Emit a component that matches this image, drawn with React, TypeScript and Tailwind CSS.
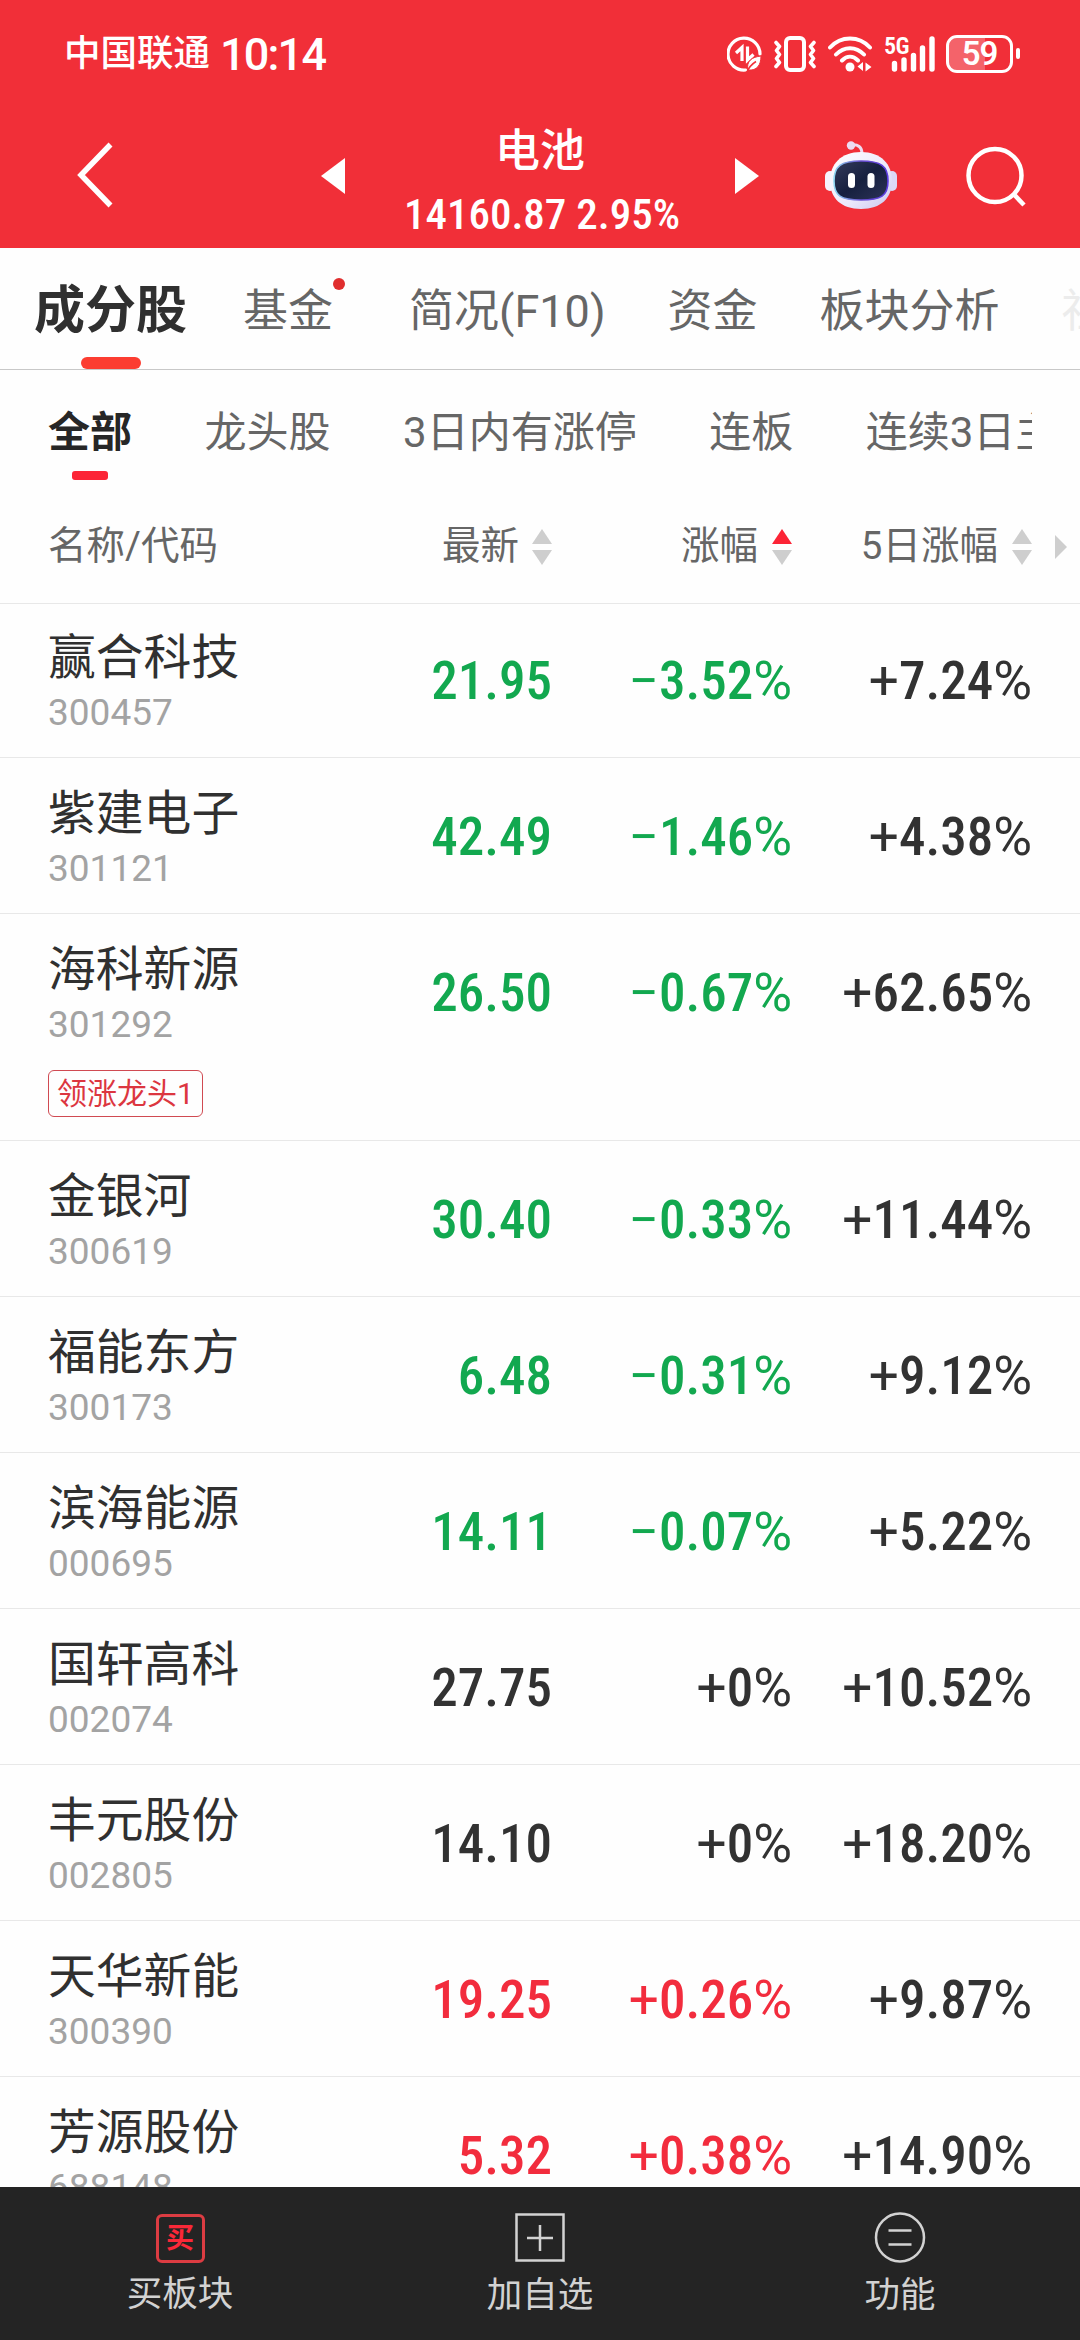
interface Stock {
  name: string;
  code: string;
  price: string;
  change: string;
  fiveDay: string;
  tag?: string;
}

const stocks: Stock[] = [
  { name: "赢合科技", code: "300457", price: "21.95", change: "−3.52%", fiveDay: "+7.24%" },
  { name: "紫建电子", code: "301121", price: "42.49", change: "−1.46%", fiveDay: "+4.38%" },
  {
    name: "海科新源",
    code: "301292",
    price: "26.50",
    change: "−0.67%",
    fiveDay: "+62.65%",
    tag: "领涨龙头1",
  },
  { name: "金银河", code: "300619", price: "30.40", change: "−0.33%", fiveDay: "+11.44%" },
  { name: "福能东方", code: "300173", price: "6.48", change: "−0.31%", fiveDay: "+9.12%" },
  { name: "滨海能源", code: "000695", price: "14.11", change: "−0.07%", fiveDay: "+5.22%" },
  { name: "国轩高科", code: "002074", price: "27.75", change: "+0%", fiveDay: "+10.52%" },
  { name: "丰元股份", code: "002805", price: "14.10", change: "+0%", fiveDay: "+18.20%" },
  { name: "天华新能", code: "300390", price: "19.25", change: "+0.26%", fiveDay: "+9.87%" },
  { name: "芳源股份", code: "688148", price: "5.32", change: "+0.38%", fiveDay: "+14.90%" },
];

const tabs = ["简况(F10)", "资金", "板块分析"];
const filters = ["龙头股", "3日内有涨停", "连板", "连续3日主力"];

function changeColor(change: string) {
  if (change.startsWith("−")) return "text-[#12a84f]";
  if (change === "+0%") return "text-[#323232]";
  return "text-[#f22c3d]";
}

function StatusBar() {
  return (
    <div className="flex h-[107px] items-center justify-between pl-16 pr-[60px] text-white">
      <div className="flex items-center gap-[10px] pt-0.5 font-medium leading-none">
        <span className="text-[36.5px]">中国联通</span>
        <span className="text-[45px] tracking-[-1.8px]">10:14</span>
      </div>
      <div className="flex items-center">
        {/* data saver */}
        <svg className="h-9 w-[35px]" viewBox="0 0 35 36" fill="none" stroke="currentColor">
          <path d="M18.500 34A16 16 0 1 1 33 18" strokeWidth="3.200" strokeLinecap="round" />
          <path d="M15 25V11.500L9 17M20.500 10.500v13.500l6-5.500" strokeWidth="3.200" />
          <path d="M21 34c-2-9 4-13 13-14 0 9-4 15-13 14Z" fill="currentColor" stroke="#f12f38" strokeWidth="1" />
          <path d="M20 36c2-5 5-8 9-10.500" stroke="#f12f38" strokeWidth="1.500" />
        </svg>
        {/* vibrate */}
        <svg className="ml-3 h-9 w-[42px]" viewBox="0 0 42 36" fill="none" stroke="currentColor">
          <rect x="12" y="2" width="18" height="32" rx="4" strokeWidth="4" />
          <path d="M2 6.500l3.500 4-3 4 3 4-3 4 3 4-3.500 4M40 6.500l-3.500 4 3 4-3 4 3 4-3 4 3.500 4" strokeWidth="3.600" strokeLinejoin="round" strokeLinecap="round" />
        </svg>
        {/* wifi */}
        <svg className="ml-3 h-9 w-11" viewBox="0 0 44 36" fill="none" stroke="currentColor" strokeWidth="4" strokeLinecap="round">
          <path d="M2 11.500C13-.500 31-.500 42 11.500M8 18.500c8-8.500 20-8.500 28 0M14 24.500c5-5 11-5 16 0" />
          <circle cx="22" cy="31" r="4.500" fill="currentColor" stroke="none" />
          <path d="M35 26v9l-5.500-4.500zM37.500 35.500v-9l6 4.500z" fill="currentColor" stroke="none" />
        </svg>
        {/* 5G signal */}
        <div className="relative ml-3 h-9 w-[51px]">
          <span className="absolute left-0 top-[-2px] font-['Roboto_Condensed'] text-[24px] font-semibold leading-none tracking-[-0.5px]">5G</span>
          <svg className="h-9 w-[51px]" viewBox="0 0 51 36" stroke="currentColor" strokeWidth="5.400" strokeLinecap="round">
            <path d="M10.500 27.500v5.500M20 24v9M29.500 19.500V33M38.500 12v21M48 3v30" />
          </svg>
        </div>
        {/* battery */}
        <div className="ml-[11px] flex items-center gap-[3px]">
          <div className="relative flex h-[38px] w-[67px] items-center justify-center overflow-hidden rounded-[11px] border-[3px] border-white">
            <div className="absolute inset-y-0 left-0 w-[59%] bg-white/25" />
            <span className="relative text-[33px] font-semibold leading-none tracking-[-1px]">59</span>
          </div>
          <div className="h-[11px] w-[4px] rounded-sm bg-white" />
        </div>
      </div>
    </div>
  );
}

function Robot() {
  return (
    <svg className="h-[70px] w-[72px]" viewBox="0 0 72 70">
      <defs>
        <linearGradient id="shell" x1="0" y1="0" x2="1" y2="1">
          <stop offset="0" stopColor="#ffffff" />
          <stop offset="0.600" stopColor="#ece9fb" />
          <stop offset="1" stopColor="#c9c6ef" />
        </linearGradient>
        <linearGradient id="rim" x1="0" y1="0" x2="1" y2="0">
          <stop offset="0" stopColor="#8fd8f2" />
          <stop offset="0.500" stopColor="#6a4fd0" />
          <stop offset="1" stopColor="#5a3be0" />
        </linearGradient>
        <linearGradient id="visor" x1="0" y1="0" x2="1" y2="1">
          <stop offset="0" stopColor="#343b5c" />
          <stop offset="0.500" stopColor="#16203f" />
          <stop offset="1" stopColor="#2c3357" />
        </linearGradient>
      </defs>
      <path d="M26 5c7-1 11 2 11 9" fill="none" stroke="#eedcf0" strokeWidth="3" />
      <circle cx="26" cy="5.500" r="4.200" fill="#ecdcf2" />
      <rect x="0" y="31" width="10" height="20" rx="5" fill="#f6f2fd" />
      <rect x="62" y="31" width="10" height="20" rx="5" fill="#dcd8f6" />
      <path d="M36 12c20 0 31 12 31 29S56 69 36 69 5 58 5 41s11-29 31-29Z" fill="url(#shell)" />
      <path d="M36 21c20 0 27 5 27 20s-7 19-27 19-27-4-27-19 7-20 27-20Z" fill="url(#visor)" stroke="url(#rim)" strokeWidth="1.600" />
      <rect x="23" y="33" width="7" height="15" rx="3.500" fill="#fff" />
      <rect x="42.500" y="33" width="7" height="15" rx="3.500" fill="#fff" />
    </svg>
  );
}

function Header() {
  return (
    <header className="h-[248px] shrink-0 bg-[#f12f38] text-white">
      <StatusBar />
      <div className="flex h-[141px] pl-[76px] pr-[53px]">
        <svg className="mt-[34px] h-[68px] w-[38px]" viewBox="0 0 38 68" fill="none" stroke="currentColor" strokeWidth="5.500">
          <path d="M34.500 3.500 5 34l29.500 30.500" />
        </svg>
        <svg className="ml-[207px] mt-[51px] h-9 w-6" viewBox="0 0 24 36" fill="currentColor">
          <path d="M24 0v36L0 18z" />
        </svg>
        <div className="flex w-[390px] flex-col items-center">
          <h1 className="mt-[21px] text-[45px] font-medium leading-[48px]">电池</h1>
          <p className="mt-[14px] whitespace-nowrap pl-1 font-['Roboto_Condensed'] text-[43px] font-medium leading-[48px]">
            14160.87 2.95%
          </p>
        </div>
        <svg className="mt-[51px] h-9 w-6" viewBox="0 0 24 36" fill="currentColor">
          <path d="M0 0v36l24-18z" />
        </svg>
        <div className="ml-[66px] mt-[33px]">
          <Robot />
        </div>
        <svg className="ml-[68px] mt-[38px] h-[62px] w-[62px]" viewBox="0 0 62 62" fill="none" stroke="currentColor" strokeWidth="4.500">
          <circle cx="30" cy="30.500" r="26.500" />
          <path d="M48.500 49 59 60" />
        </svg>
      </div>
    </header>
  );
}

function TabBar() {
  return (
    <nav className="flex h-[122px] shrink-0 items-center overflow-hidden whitespace-nowrap border-b border-[#c8c8c8] pl-[34px] text-[45px] leading-none text-[#666]">
      <div className="relative flex h-full items-center pt-1 text-[51px] font-bold text-[#303030]">
        成分股
        <div className="absolute bottom-0 left-[47px] h-3 w-[60px] rounded-full bg-[#fc3d31]" />
      </div>
      <div className="ml-[56px] flex items-center gap-[62px] pt-[5px]">
        <div className="relative mr-[14px]">
          基金
          <span className="absolute right-[-12px] top-[-11px] h-3 w-3 rounded-full bg-[#e02e2e]" />
        </div>
        {tabs.map((tab) => (
          <div key={tab}>{tab}</div>
        ))}
        <div className="text-[#ececec]">社区</div>
      </div>
    </nav>
  );
}

function FilterBar() {
  return (
    <div className="mx-12 flex h-[120px] shrink-0 items-center gap-[72.5px] overflow-hidden whitespace-nowrap pt-1.5 text-[42px] leading-none text-[#666]">
      <div className="relative flex h-full items-center font-bold text-[#262626]">
        全部
        <div className="absolute bottom-[10px] left-6 h-[9px] w-9 rounded-[3px] bg-[#fc2436]" />
      </div>
      {filters.map((filter) => (
        <div key={filter}>{filter}</div>
      ))}
    </div>
  );
}

function SortIcon({ active = false }: { active?: boolean }) {
  return (
    <svg className="h-9 w-5" viewBox="0 0 20 36">
      <path d="M10 0l10 15H0z" fill={active ? "#fc2436" : "#cecece"} />
      <path d="M10 36l10-15H0z" fill="#cecece" />
    </svg>
  );
}

function TableHead() {
  return (
    <div className="flex h-[114px] shrink-0 items-center border-b border-[#e8e8e8] pl-12 text-[38.5px] leading-none text-[#666]">
      <div className="w-[264px]">名称/代码</div>
      <div className="flex w-[240px] items-center justify-end gap-[13px]">
        最新
        <SortIcon />
      </div>
      <div className="flex w-[240px] items-center justify-end gap-[14px]">
        涨幅
        <SortIcon active />
      </div>
      <div className="flex w-[240px] items-center justify-end gap-[14px]">
        5日涨幅
        <SortIcon />
      </div>
      <svg className="ml-[23px] h-6 w-3" viewBox="0 0 12 24" fill="#cecece">
        <path d="M0 0v24l12-12z" />
      </svg>
    </div>
  );
}

// condensed digits between a full-width sign and percent mark
function Percent({ value }: { value: string }) {
  return (
    <>
      <span className="font-['Roboto'] font-normal">{value[0]}</span>
      {value.slice(1, -1)}
      <span className="font-['Roboto'] font-normal">%</span>
    </>
  );
}

function StockRow({ stock }: { stock: Stock }) {
  const color = changeColor(stock.change);
  return (
    <div className="border-b border-[#e8e8e8] pl-12 first:-mt-0.5">
      <div className="flex h-[155px] items-center pt-1 font-['Roboto_Condensed'] text-[53px] font-medium leading-none">
        <div className="w-[264px] pt-[3px] font-['Roboto','Noto_Sans_CJK_SC',sans-serif] font-normal">
          <div className="text-[47.800px] leading-[58px] text-[#303030]">{stock.name}</div>
          <div className="mt-px text-[37px] leading-[50px] text-[#a3a3a3]">{stock.code}</div>
        </div>
        <div className={`w-[240px] text-right ${color}`}>{stock.price}</div>
        <div className={`w-[240px] text-right ${color}`}>
          <Percent value={stock.change} />
        </div>
        <div className="w-[240px] text-right text-[#323232]">
          <Percent value={stock.fiveDay} />
        </div>
      </div>
      {stock.tag && (
        <div className="h-[71px] pt-px">
          <span className="flex h-[47px] w-[155px] items-center justify-center rounded-md border-[1.500px] border-[#d04a52] text-[30px] leading-none text-[#dc3640]">
            {stock.tag}
          </span>
        </div>
      )}
    </div>
  );
}

function BottomBar() {
  return (
    <footer className="flex h-[153px] shrink-0 bg-[#242424] text-[35.500px] leading-[44px] text-[#d2d2d2]">
      <div className="flex flex-1 flex-col items-center pt-[27px]">
        <div className="flex h-[49px] w-[49px] items-center justify-center rounded-md border-[3px] border-[#dc3c42] text-[28px] font-bold leading-none text-[#fa2838]">
          买
        </div>
        <span className="mt-[9px]">买板块</span>
      </div>
      <div className="flex flex-1 flex-col items-center pt-[26px]">
        <svg className="h-[50px] w-[50px]" viewBox="0 0 50 50" fill="none" stroke="currentColor" strokeWidth="2.500">
          <rect x="1.500" y="1.500" width="47" height="46" />
          <path d="M25 12v26M12 25h26" />
        </svg>
        <span className="mt-[10px]">加自选</span>
      </div>
      <div className="flex flex-1 flex-col items-center pt-[25px]">
        <svg className="h-[51px] w-[52px]" viewBox="0 0 52 51" fill="none" stroke="currentColor" strokeWidth="2.500">
          <circle cx="26" cy="25.500" r="24" />
          <path d="M14.500 18.500h23M14.500 32.500h23" />
        </svg>
        <span className="mt-[10px]">功能</span>
      </div>
    </footer>
  );
}

export default function App() {
  return (
    <div className="flex h-[2340px] w-[1080px] flex-col overflow-hidden bg-[#fefefe] font-['Roboto','Noto_Sans_CJK_SC',sans-serif]">
      <Header />
      <TabBar />
      <FilterBar />
      <TableHead />
      <main className="min-h-0 flex-1">
        {stocks.map((stock) => (
          <StockRow key={stock.code} stock={stock} />
        ))}
      </main>
      <div className="relative">
        <BottomBar />
      </div>
    </div>
  );
}
